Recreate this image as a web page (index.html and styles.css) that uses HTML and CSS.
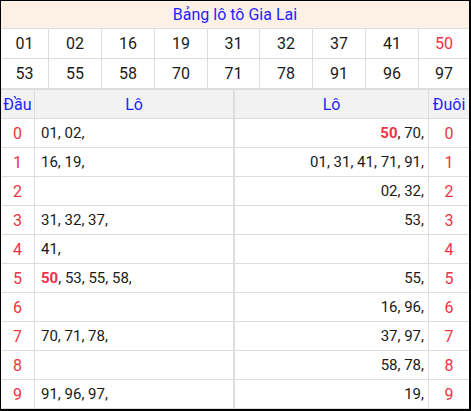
FILE: index.html
```
<!DOCTYPE html>
<html lang="vi">
<head>
<meta charset="utf-8">
<title>Bảng lô tô Gia Lai</title>
<link rel="stylesheet" href="styles.css">
</head>
<body>
<div class="board">
  <div class="title">Bảng lô tô Gia Lai</div>
  <div class="nums">
    <div class="n">01</div><div class="n">02</div><div class="n">16</div><div class="n">19</div><div class="n">31</div><div class="n">32</div><div class="n">37</div><div class="n">41</div><div class="n red">50</div>
    <div class="n">53</div><div class="n">55</div><div class="n">58</div><div class="n">70</div><div class="n">71</div><div class="n">78</div><div class="n">91</div><div class="n">96</div><div class="n">97</div>
  </div>
  <div class="lo">
    <div class="h">Đầu</div><div class="h">Lô</div><div class="h mid">Lô</div><div class="h">Đuôi</div>

    <div class="d">0</div><div class="l">01, 02,</div><div class="r mid"><b>50</b>, 70,</div><div class="d">0</div>
    <div class="d">1</div><div class="l">16, 19,</div><div class="r mid">01, 31, 41, 71, 91,</div><div class="d">1</div>
    <div class="d">2</div><div class="l"></div><div class="r mid">02, 32,</div><div class="d">2</div>
    <div class="d">3</div><div class="l">31, 32, 37,</div><div class="r mid">53,</div><div class="d">3</div>
    <div class="d">4</div><div class="l">41,</div><div class="r mid"></div><div class="d">4</div>
    <div class="d">5</div><div class="l"><b>50</b>, 53, 55, 58,</div><div class="r mid">55,</div><div class="d">5</div>
    <div class="d">6</div><div class="l"></div><div class="r mid">16, 96,</div><div class="d">6</div>
    <div class="d">7</div><div class="l">70, 71, 78,</div><div class="r mid">37, 97,</div><div class="d">7</div>
    <div class="d">8</div><div class="l"></div><div class="r mid">58, 78,</div><div class="d">8</div>
    <div class="d">9</div><div class="l">91, 96, 97,</div><div class="r mid">19,</div><div class="d">9</div>
  </div>
</div>
</body>
</html>
```
FILE: styles.css
```
html, body {
  margin: 0;
  padding: 0;
  background: #fff;
}
body {
  font-family: Roboto, "Liberation Sans", sans-serif;
  color: #1a1a1a;
}
.board {
  width: 471px;
  box-sizing: border-box;
  border-style: solid;
  border-color: #000;
  border-width: 1px 2px 2px 1px;
  background: #dddddd;
  display: flex;
  flex-direction: column;
  gap: 1px;
}
.title {
  height: 27px;
  background: #fdf1e6;
  color: #1f1fff;
  font-size: 16px;
  display: flex;
  align-items: center;
  justify-content: center;
}
.nums {
  display: grid;
  grid-template-columns: 47px 52px 52px 52px 51px 52px 52px 52px 50px;
  grid-auto-rows: 29px;
  gap: 1px;
  margin-bottom: 1px;
}
.n {
  background: #fff;
  font-size: 16px;
  display: flex;
  align-items: center;
  justify-content: center;
}
.red {
  color: #ee3344;
}
.lo {
  display: grid;
  grid-template-columns: 33px 198px 194px 40px;
  grid-auto-rows: 28px;
  gap: 1px;
  padding-bottom: 1px;
}
.lo > div {
  background: #fff;
  display: flex;
  align-items: center;
  font-size: 15px;
  white-space: nowrap;
}
.lo > .h {
  background: #f2f2f2;
  color: #1f1fff;
  justify-content: center;
  font-size: 16px;
}
.lo > .mid {
  border-left: 1px solid #dddddd;
}
.lo > .d {
  justify-content: center;
  color: #ee3344;
  font-size: 16px;
}
.lo > .l {
  padding-left: 6px;
}
.lo > .r {
  justify-content: flex-end;
  padding-right: 4px;
}
.lo b {
  color: #ee3344;
  font-weight: bold;
}
```
